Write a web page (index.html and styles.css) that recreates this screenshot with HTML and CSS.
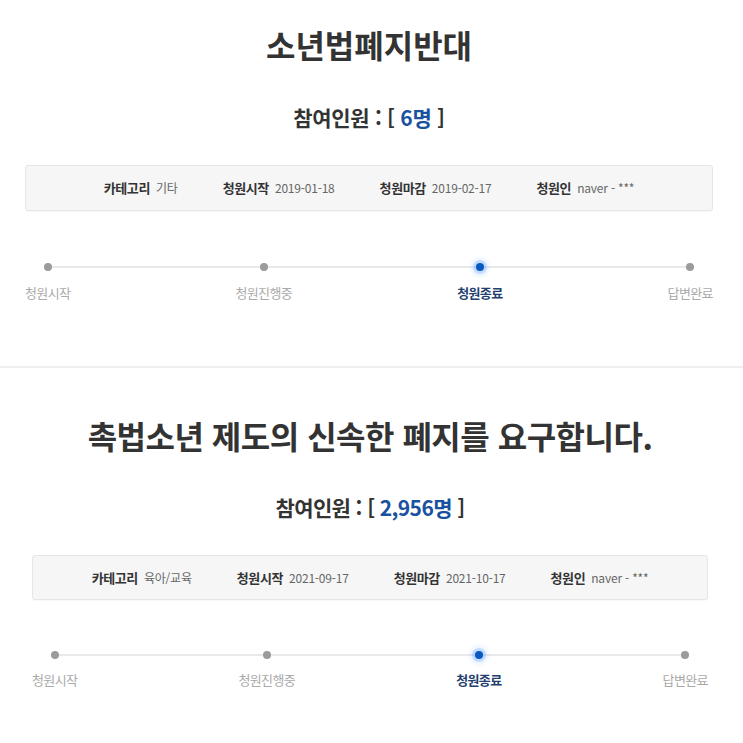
FILE: index.html
```html
<!DOCTYPE html>
<html lang="ko">
<head>
<meta charset="utf-8">
<title>청원</title>
<link rel="stylesheet" href="styles.css">
</head>
<body>
<section class="petition petition-first">
  <h1 class="title">소년법폐지반대</h1>
  <p class="count">참여인원 : [ <span class="num">6명</span> ]</p>
  <ul class="info">
    <li><b>카테고리</b><span>기타</span></li>
    <li><b>청원시작</b><span>2019-01-18</span></li>
    <li><b>청원마감</b><span>2019-02-17</span></li>
    <li><b>청원인</b><span>naver - ***</span></li>
  </ul>
  <ol class="steps">
    <li class="step"><i class="dot"></i><span>청원시작</span></li>
    <li class="step"><i class="dot"></i><span>청원진행중</span></li>
    <li class="step active"><i class="dot"></i><span>청원종료</span></li>
    <li class="step"><i class="dot"></i><span>답변완료</span></li>
  </ol>
</section>
<section class="petition petition-second">
  <h1 class="title">촉법소년 제도의 신속한 폐지를 요구합니다.</h1>
  <p class="count">참여인원 : [ <span class="num">2,956명</span> ]</p>
  <ul class="info">
    <li><b>카테고리</b><span>육아/교육</span></li>
    <li><b>청원시작</b><span>2021-09-17</span></li>
    <li><b>청원마감</b><span>2021-10-17</span></li>
    <li><b>청원인</b><span>naver - ***</span></li>
  </ul>
  <ol class="steps">
    <li class="step"><i class="dot"></i><span>청원시작</span></li>
    <li class="step"><i class="dot"></i><span>청원진행중</span></li>
    <li class="step active"><i class="dot"></i><span>청원종료</span></li>
    <li class="step"><i class="dot"></i><span>답변완료</span></li>
  </ol>
</section>
</body>
</html>
```
FILE: styles.css
```css
* { box-sizing: border-box; }
html, body { margin: 0; padding: 0; background: #fff; }
body {
  font-family: "Noto Sans CJK KR", "Noto Sans", sans-serif;
  color: #333;
}
.petition { display: flex; flex-direction: column; }
.petition-first { padding: 25px 30px 65px 25px; }
.petition-second {
  border-top: 2px solid #efefef;
  padding: 48px 35px 60px 32px;
}
.title {
  margin: 0;
  text-align: center;
  font-size: 32px;
  line-height: 38px;
  font-weight: 700;
  color: #333;
  letter-spacing: 0;
}
.petition-second .title { letter-spacing: -0.5px; }
.count {
  margin: 41px 0 0;
  text-align: center;
  font-size: 21px;
  line-height: 26px;
  font-weight: 700;
  color: #333;
  letter-spacing: -0.3px;
}
.petition-second .count { margin-top: 40px; letter-spacing: -0.6px; }
.num { color: #1a52a0; }
.info {
  list-style: none;
  margin: 35px 0 0;
  padding: 0;
  height: 46px;
  display: flex;
  justify-content: center;
  align-items: center;
  gap: 45px;
  background: #f6f6f6;
  border: 1px solid #e6e6e6;
  border-radius: 3px;
  box-shadow: 0 1px 1px rgba(0,0,0,0.03);
}
.petition-second .info { margin-top: 35px; height: 45px; }
.info li { display: flex; align-items: center; gap: 6px; font-size: 12px; line-height: 16px; }
.info b { font-size: 13px; font-weight: 700; color: #333; letter-spacing: -0.4px; }
.info span { color: #666; letter-spacing: -0.2px; }
.steps {
  list-style: none;
  margin: 52px 0 0;
  padding: 0;
  display: flex;
  justify-content: space-between;
  position: relative;
}
.petition-second .steps { margin-top: 51px; }
.steps::before {
  content: "";
  position: absolute;
  left: 23px;
  right: 23px;
  top: 3px;
  height: 2px;
  background: #e9e9e9;
}
.step {
  display: flex;
  flex-direction: column;
  align-items: center;
  gap: 13px;
  position: relative;
}
.petition-second .step { gap: 12px; }
.dot {
  display: block;
  width: 8px;
  height: 8px;
  border-radius: 50%;
  background: #9b9b9b;
}
.step span {
  font-size: 13px;
  line-height: 17px;
  color: #aaa;
  letter-spacing: -0.6px;
  white-space: nowrap;
}
.step.active .dot {
  background: #0a58c2;
  box-shadow: 0 0 0 3px rgba(60, 140, 255, 0.22), 0 0 4px 5px rgba(90, 160, 255, 0.15);
}
.step.active span { color: #253f6e; font-weight: 700; }
```
